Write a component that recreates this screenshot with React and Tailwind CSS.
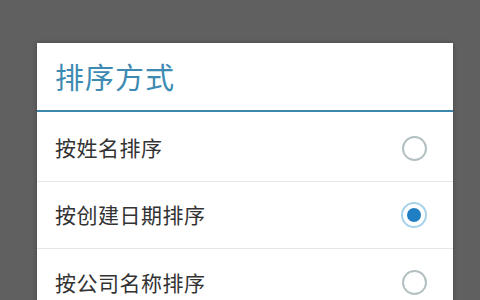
import React from "react";

const rows = [
  { label: "按姓名排序", checked: false },
  { label: "按创建日期排序", checked: true },
  { label: "按公司名称排序", checked: false },
];

function Radio({ checked }) {
  if (checked) {
    return (
      <div className="w-[26px] h-[26px] rounded-full border-[2px] border-[#a6d2ea] flex items-center justify-center">
        <div className="w-[14px] h-[14px] rounded-full bg-[#1f7fc2]" />
      </div>
    );
  }
  return <div className="w-[25px] h-[25px] rounded-full border-[2px] border-[#b3bfc1]" />;
}

export default function App() {
  return (
    <div
      className="w-[480px] h-[300px] bg-[#606060] overflow-hidden pt-[43px] pl-[37px]"
      style={{ fontFamily: '"Noto Sans CJK SC", "Noto Sans", sans-serif' }}
    >
      <div className="w-[416px] bg-white shadow-[0_0_4px_rgba(0,0,0,0.3)]">
        <div className="h-[69px] flex items-center pl-[18px] pb-[1px] border-b-2 border-[#3b87ad]">
          <span className="text-[29px] leading-none text-[#3d8ab2] tracking-[1px]">排序方式</span>
        </div>
        <div className="pt-[3px]">
          {rows.map((r, i) => (
            <div
              key={i}
              className={
                "h-[67px] flex items-center justify-between pl-[18px] pr-[26px] " +
                (i < rows.length - 1 ? "border-b border-[#e6e6e6]" : "")
              }
            >
              <span className="text-[21px] text-[#333333] tracking-[0.5px]">{r.label}</span>
              <Radio checked={r.checked} />
            </div>
          ))}
        </div>
      </div>
    </div>
  );
}
